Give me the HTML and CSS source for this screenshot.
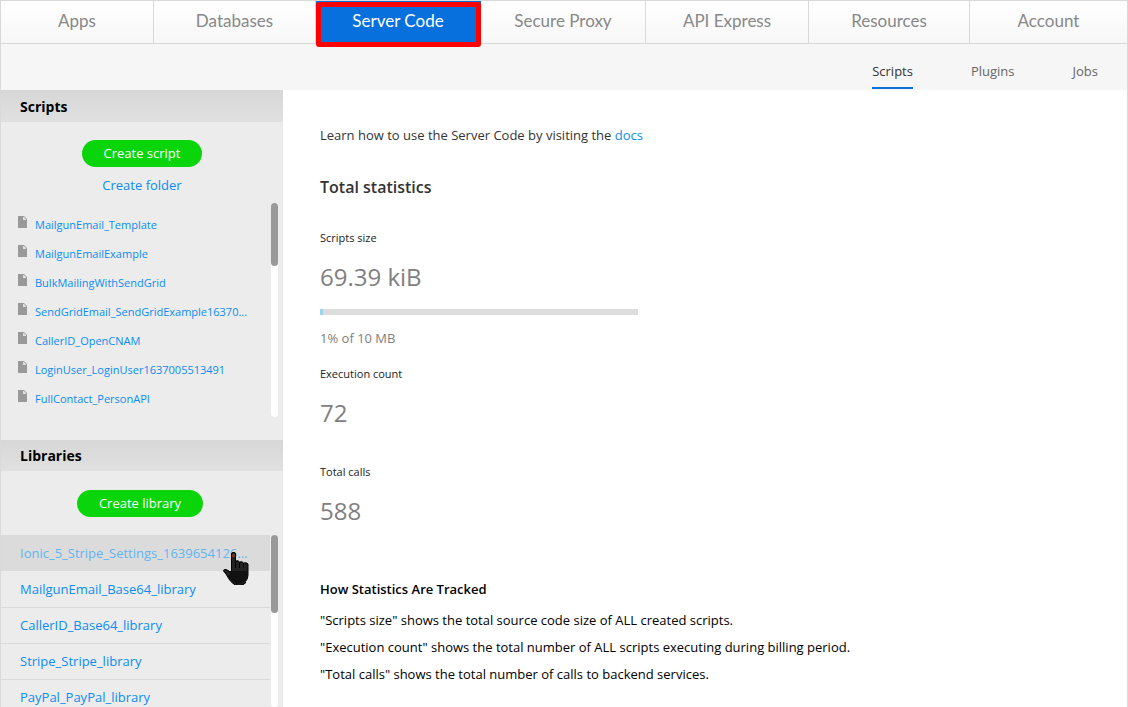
FILE: index.html
```html
<!DOCTYPE html>
<html lang="en">
<head>
  <meta charset="UTF-8">
  <meta name="viewport" content="width=device-width, initial-scale=1.0">
  <title>Server Code</title>
  <link rel="stylesheet" href="styles.css">
</head>
<body>

  <svg class="sprite" aria-hidden="true">
    <symbol id="file" viewBox="0 0 9 12">
      <path fill="#999" d="M0 0h6l3 3v9H0z"/>
      <path fill="#e0e0e0" d="M5 1h1l2 2v1H5z"/>
    </symbol>
  </svg>

  <div class="app">
    <nav class="tabs">
      <a href="#">Apps</a>
      <a href="#">Databases</a>
      <a href="#" class="active">Server Code</a>
      <a href="#">Secure Proxy</a>
      <a href="#">API Express</a>
      <a href="#">Resources</a>
      <a href="#">Account</a>
    </nav>

    <nav class="subnav">
      <a href="#" class="active">Scripts</a>
      <a href="#">Plugins</a>
      <a href="#">Jobs</a>
    </nav>

    <div class="content">
      <aside class="sidebar">
        <section class="scripts">
          <h2>Scripts</h2>
          <div class="actions">
            <button type="button" class="create">Create script</button>
            <a href="#">Create folder</a>
          </div>
          <div class="scroll-area">
            <ul class="script-list">
              <li><svg class="icon"><use href="#file"/></svg><a href="#">MailgunEmail_Template</a></li>
              <li><svg class="icon"><use href="#file"/></svg><a href="#">MailgunEmailExample</a></li>
              <li><svg class="icon"><use href="#file"/></svg><a href="#">BulkMailingWithSendGrid</a></li>
              <li><svg class="icon"><use href="#file"/></svg><a href="#">SendGridEmail_SendGridExample16370...</a></li>
              <li><svg class="icon"><use href="#file"/></svg><a href="#">CallerID_OpenCNAM</a></li>
              <li><svg class="icon"><use href="#file"/></svg><a href="#">LoginUser_LoginUser1637005513491</a></li>
              <li><svg class="icon"><use href="#file"/></svg><a href="#">FullContact_PersonAPI</a></li>
            </ul>
            <div class="scrollbar"><div class="thumb"></div></div>
          </div>
        </section>

        <section class="libraries">
          <h2>Libraries</h2>
          <div class="actions">
            <button type="button" class="create">Create library</button>
          </div>
          <div class="scroll-area">
            <ul class="library-list">
              <li class="hovered">
                <a href="#">Ionic_5_Stripe_Settings_1639654126...</a>
                <svg class="pointer" viewBox="0 0 26 33" aria-hidden="true">
                  <path fill="#222" stroke="#000" d="M8.500 2q0-1.500 1.500-1.500h1q1.500 0 1.500 1.500v7q3-1 4 1 3-1 4 1 3-1 4.500 1v11q0 4-2.500 6.500v1.500q-2 2-6 2.500-5 0-7-2.500-2-1.500-3.500-4l-3-5-2.500-3q0-2 2.500-1.500l3 1.500 2.500 2.500z"/>
                  <path fill="#111" d="M7 19h17v4q0 4-2 6-3 3-7 3-4 0-6-3l-4-5 2-2z"/>
                  <path fill="none" stroke="#000" d="M12.500 9v7M16.500 10v6M20.500 11v5"/>
                  <path fill="#7a3208" d="M9 2h3v3h-3z"/>
                </svg>
              </li>
              <li><a href="#">MailgunEmail_Base64_library</a></li>
              <li><a href="#">CallerID_Base64_library</a></li>
              <li><a href="#">Stripe_Stripe_library</a></li>
              <li><a href="#">PayPal_PayPal_library</a></li>
            </ul>
            <div class="scrollbar"><div class="thumb"></div></div>
          </div>
        </section>
      </aside>

      <main>
        <p class="intro">Learn how to use the Server Code by visiting the <a href="#">docs</a></p>
        <h1>Total statistics</h1>

        <div class="stat size">
          <h3>Scripts size</h3>
          <p class="value">69.39 kiB</p>
          <div class="bar"><div class="fill" style="width: 1%"></div></div>
          <p class="quota">1% of 10 MB</p>
        </div>
        <div class="stat">
          <h3>Execution count</h3>
          <p class="value">72</p>
        </div>
        <div class="stat">
          <h3>Total calls</h3>
          <p class="value">588</p>
        </div>

        <div class="notes">
          <h4>How Statistics Are Tracked</h4>
          <p>"Scripts size" shows the total source code size of ALL created scripts.</p>
          <p>"Execution count" shows the total number of ALL scripts executing during billing period.</p>
          <p>"Total calls" shows the total number of calls to backend services.</p>
        </div>
      </main>
    </div>
  </div>

</body>
</html>
```
FILE: styles.css
```css
* {
  box-sizing: border-box;
}
body {
  margin: 0;
  font-family: "Open Sans", "Noto Sans", sans-serif;
  font-size: 13px;
  line-height: 18px;
  color: #333;
  background: #fff;
}
h1, h2, h3, h4, p, ul {
  margin: 0;
  padding: 0;
}
ul {
  list-style: none;
}
a {
  color: #0a8cf5;
  text-decoration: none;
}
.sprite {
  display: none;
}
.app {
  height: 100vh;
  display: flex;
  flex-direction: column;
  border: 1px solid #d9d9d9;
  border-bottom: 0;
  overflow: hidden;
}

/* main tabs */
.tabs {
  display: grid;
  grid-template-columns: 153fr 162fr 165fr 165fr 163fr 161fr 157fr;
  flex: none;
  border-bottom: 1px solid #d9d9d9;
  background: linear-gradient(#fff, #f7f7f7);
}
.tabs a {
  position: relative;
  padding: 8px 0 10px;
  border-right: 1px solid #d9d9d9;
  font-family: Lato, sans-serif;
  font-size: 17px;
  line-height: 24px;
  text-align: center;
  color: #888;
}
.tabs a:last-child {
  border-right: 0;
}
.tabs a.active {
  background: #0770dd;
  border-color: #0770dd;
  color: #fff;
}
.tabs a.active::after {
  content: "";
  position: absolute;
  inset: 1px -1px -4px 0;
  border: 5px solid #f00;
  border-radius: 3px;
}

.subnav {
  flex: none;
  display: flex;
  justify-content: flex-end;
  gap: 58px;
  padding: 18px 29px 1px;
  background: #f6f6f6;
}
.subnav a {
  padding-bottom: 7px;
  border-bottom: 2px solid transparent;
  color: #666;
}
.subnav a.active {
  color: #333;
  border-color: #0770dd;
}

.content {
  flex: 1;
  min-height: 0;
  display: flex;
}

/* sidebar */
.sidebar {
  flex: none;
  width: 282px;
  display: flex;
  flex-direction: column;
  background: #ececec;
}
.sidebar h2 {
  padding: 6px 19px 5px;
  font-size: 14px;
  line-height: 20px;
  font-weight: 700;
  color: #000;
  background: linear-gradient(#d7d7d7, #e0e0e0);
}
.actions {
  display: flex;
  flex-direction: column;
  align-items: center;
  gap: 9px;
  padding: 18px 0 9px;
}
.create {
  padding: 4px 22px 5px;
  border: 0;
  border-radius: 14px;
  background: #0ad50a;
  color: #fff;
  font: inherit;
  cursor: pointer;
}
.scroll-area {
  display: flex;
  gap: 1px;
  padding-right: 5px;
}
.scroll-area ul {
  flex: 1;
  min-width: 0;
}
.scrollbar {
  width: 7px;
  border-radius: 4px;
  background: #fff;
}
.thumb {
  height: 63px;
  border-radius: 4px;
  background: #999;
}
.scripts {
  padding-bottom: 23px;
}
.scripts h2 {
  padding: 7px 19px 5px;
}
.script-list {
  padding: 8px 0 3px 17px;
}
.script-list li {
  display: flex;
  gap: 8px;
  height: 29px;
  padding-top: 5px;
  font-size: 11px;
}
.icon {
  width: 9px;
  height: 12px;
}
.libraries {
  flex: 1;
  min-height: 0;
  display: flex;
  flex-direction: column;
}
.libraries .actions {
  padding: 19px 4px 18px 0;
}
.libraries .scroll-area {
  flex: 1;
  min-height: 0;
}
.libraries .thumb {
  height: 78px;
}
.library-list li {
  position: relative;
  padding: 8px 19px 9px;
  border-bottom: 1px solid #dadada;
}
.library-list .hovered {
  padding: 9px 19px;
  border-color: transparent;
  background: #dbdbdb;
  background-clip: padding-box;
}
.library-list .hovered a {
  color: #62b5f0;
}
.pointer {
  position: absolute;
  left: 222px;
  top: 17px;
  width: 26px;
  height: 33px;
}

/* statistics */
main {
  flex: 1;
  min-width: 0;
  padding: 36px 37px;
}
h1 {
  margin: 32px 0 31px;
  font-size: 16px;
  line-height: 22px;
  font-weight: 600;
}
.stat {
  margin-bottom: 35px;
}
.stat.size {
  margin-bottom: 18px;
}
.stat h3 {
  font-size: 11px;
  line-height: 18px;
  font-weight: 500;
  color: #222;
}
.value {
  margin-top: 15px;
  font-size: 24px;
  line-height: 30px;
  font-weight: 500;
  color: #808080;
}
.bar {
  width: 100%;
  max-width: 318px;
  height: 6px;
  margin: 17px 0 14px;
  background: #dcdcdc;
}
.fill {
  height: 100%;
  background: #a0d2f2;
}
.quota {
  color: #808080;
}
.notes {
  padding-top: 19px;
  color: #000;
}
.notes h4 {
  margin-bottom: 13px;
  font-size: 13px;
  font-weight: 600;
}
.notes p {
  margin-bottom: 9px;
}
```
